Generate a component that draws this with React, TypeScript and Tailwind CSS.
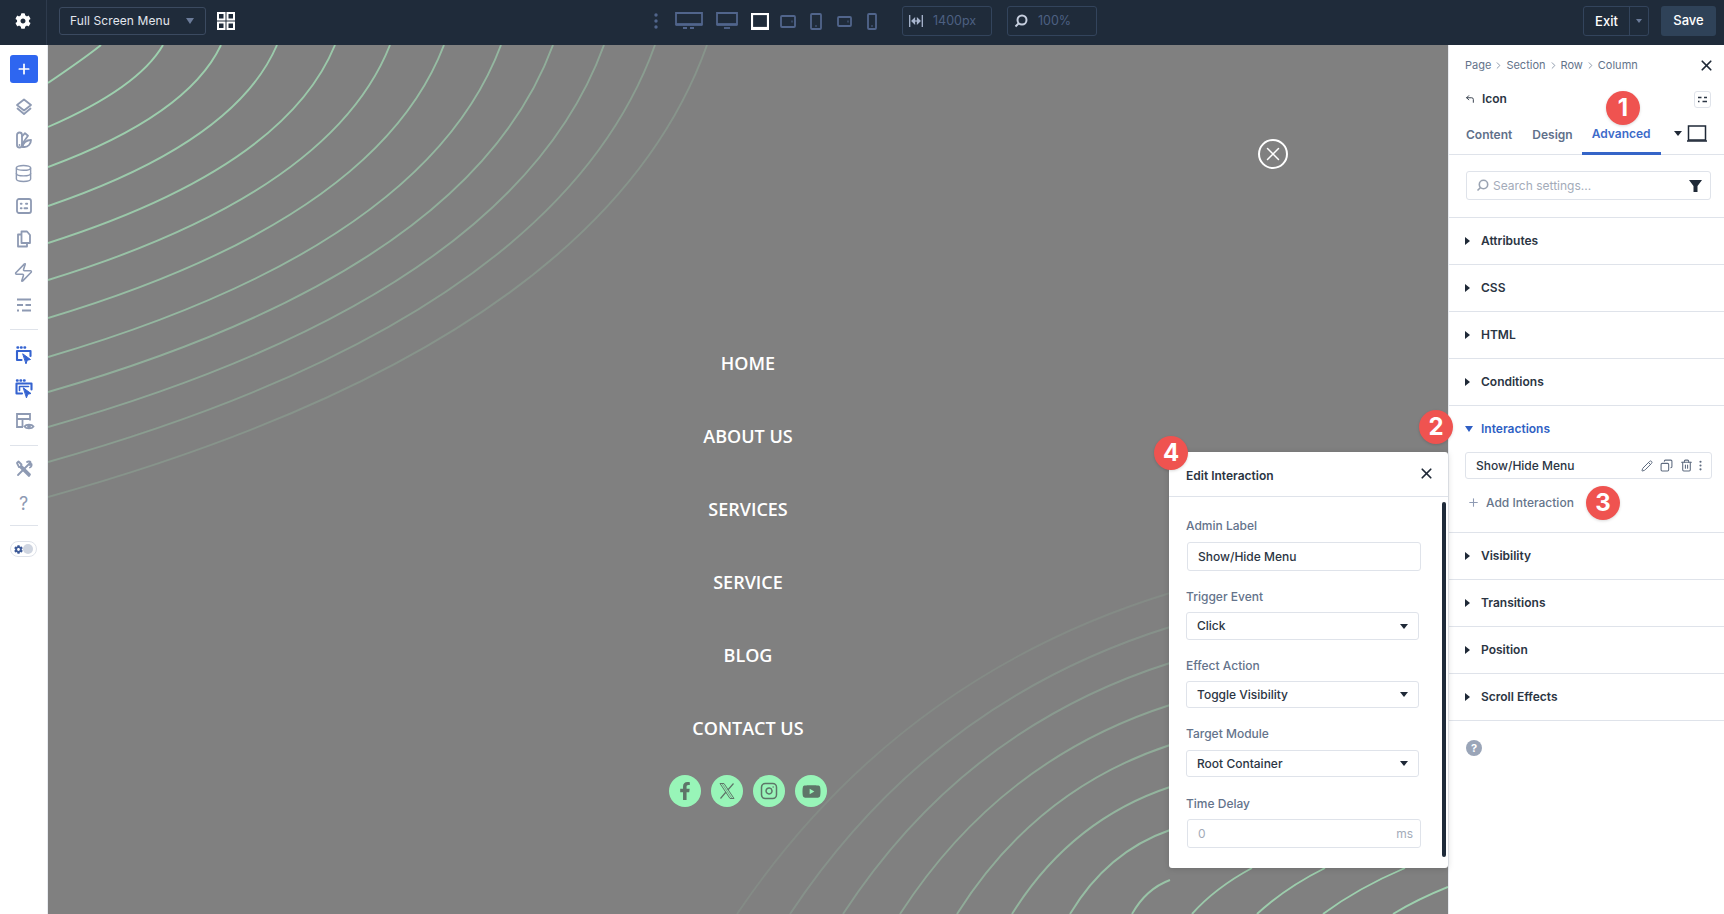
import React from "react";
import { FaCog, FaFacebookF, FaYoutube } from "react-icons/fa";
import { Database, Zap, X, Plus, Pencil, Copy, Trash2, EllipsisVertical, CornerUpLeft, ChevronRight, Instagram } from "lucide-react";

const TL: [number, number, number][] = [
  [101, 83, 0.72], [163, 127, 0.72], [221, 167, 0.7], [277, 206, 0.68], [335, 243, 0.65], [390, 280, 0.6],
  [444, 318, 0.55], [501, 357, 0.5], [553, 392, 0.42], [604, 427, 0.34], [655, 462, 0.26], [707, 497, 0.18],
];
const BR: [number, number, number][] = [
  [737, 593, 0.1], [790, 627, 0.16], [843, 663, 0.24], [900, 705, 0.32], [957, 745, 0.4], [1012, 787, 0.48],
  [1070, 830, 0.56], [1132, 880, 0.62],
];
const BR2: [string, number][] = [
  ["M1192 914 Q1215 888 1252 868", 0.66],
  ["M1257 914 Q1285 888 1325 868", 0.7],
  ["M1323 914 Q1358 888 1405 868", 0.72],
  ["M1393 914 Q1418 899 1448 887", 0.72],
];
const LINE = "#a8eebf";

function Arcs() {
  return (
    <svg className="absolute inset-0 w-[1400px] h-[869px]" viewBox="48 45 1400 869" fill="none">
      {TL.map(([x, y, o]) => (
        <path key={x} d={`M${x} 45 Q${0.85 * x} ${0.69 * y} 48 ${y}`} stroke={LINE} strokeOpacity={o} strokeWidth={1.9} />
      ))}
      {BR.map(([x, y, o]) => (
        <path key={x} d={`M${x} 914 Q${x + 0.371 * (1170 - x)} ${y + 0.26 * (914 - y)} 1170 ${y}`} stroke={LINE} strokeOpacity={o} strokeWidth={1.9} />
      ))}
      {BR2.map(([d, o]) => (
        <path key={d} d={d} stroke={LINE} strokeOpacity={o} strokeWidth={1.9} />
      ))}
    </svg>
  );
}

const S = ({ children, w = 20, h = 20, c = "text-[#8e9ab3]" }: { children: React.ReactNode; w?: number; h?: number; c?: string }) => (
  <svg width={w} height={h} viewBox={`0 0 ${w} ${h}`} fill="none" stroke="currentColor" strokeWidth={1.8} strokeLinecap="round" strokeLinejoin="round" className={c}>
    {children}
  </svg>
);

const Divider = () => <div className="w-7 h-px bg-[#dfe3ea]" />;

function Slot({ className, children }: { className: string; children: React.ReactNode }) {
  return <div className={`flex items-center justify-center ${className}`}>{children}</div>;
}

function Sidebar() {
  const blue = "text-[#3563d0]";
  return (
    <div className="w-12 shrink-0 bg-white flex flex-col items-center border-r border-[#e8ebf0]">
      <button className="mt-[10px] w-7 h-7 rounded-[3px] bg-[#2e66f0] text-white flex items-center justify-center">
        <Plus size={16} strokeWidth={2.6} />
      </button>
      <Slot className="h-[33px] w-full mt-[7.5px]">
        <S><path d="M10 2.5 17 8l-7 5.500L3 8Z" /><path d="M3.500 11.500 10 17l6.500-5.500" /></S>
      </Slot>
      <Slot className="h-[33px] w-full">
        <S>
          <path d="M3 5a2.500 2.500 0 0 1 5 0v10a2.500 2.500 0 0 1-5 0Z" />
          <path d="M8 6.500 11 3.200l3 2.600-6 8.500" />
          <path d="M8.500 17c.5-3.500 3.500-7 8.500-7 0 4-3 7-6.500 7Z" />
          <path d="M5.500 15h.01" />
        </S>
      </Slot>
      <Slot className="h-[33px] w-full"><Database size={19} className="text-[#8e9ab3]" strokeWidth={1.8} /></Slot>
      <Slot className="h-[33px] w-full">
        <S><rect x="3" y="3" width="14" height="14" rx="2" /><path d="M6.800 7.800h.8M12 7.800h1.200M6.800 12.200h.8M10.500 12.200h2.700" strokeWidth={1.9} /></S>
      </Slot>
      <Slot className="h-[33px] w-full">
        <S><path d="M7.500 2.500H13l3 3.500V14H7.500Z" /><path d="M7 5.500H4V17.500h9V14.500" /></S>
      </Slot>
      <Slot className="h-[33px] w-full"><Zap size={21} className="text-[#8e9ab3]" strokeWidth={1.8} /></Slot>
      <Slot className="h-[33px] w-full">
        <S><path d="M3 4.500h14M3 10h6M11.500 10H17M3 15.500h2M8 15.500h9" strokeWidth={2.2} strokeLinecap="butt" /></S>
      </Slot>
      <div className="mt-[7.5px]"><Divider /></div>
      <Slot className="h-[33px] w-full mt-[8.5px]">
        <S c={blue}>
          <path d="M3.500 2.500h.6M7 2.500h.6M10.500 2.500h.6" strokeWidth={2.4} />
          <path d="M3 15V6h13.500v5M3 15h4.500" strokeWidth={2.1} />
          <path d="M9 9l7.500 5.500-3.200.7-1.200 3.300Z" fill="currentColor" strokeWidth={1} />
        </S>
      </Slot>
      <Slot className="h-[33px] w-full">
        <S c={blue}>
          <path d="M3 2.500h.6M6.500 2.500h.6M10 2.500h.6" strokeWidth={2.4} />
          <path d="M2.500 15.500V5.500h15v6M2.500 15.500h5.500" strokeWidth={2.1} />
          <path d="M5.500 12.500V8.500h9" strokeWidth={1.6} />
          <path d="M9.500 10l7.500 5.500-3.200.7-1.200 3.300Z" fill="currentColor" strokeWidth={1} />
        </S>
      </Slot>
      <Slot className="h-[33px] w-full mt-[1px]">
        <svg width={22} height={20} viewBox="0 0 22 20" fill="none" stroke="#8e9ab3" strokeWidth={1.8} className="ml-[2px]">
          <path d="M9 15H3V2h13v6.500M3 7h13M8.500 7v8" />
          <path d="M10.500 14.500c1.600-2.600 7.400-2.600 9 0-1.600 2.600-7.400 2.600-9 0Z" fill="#fff" />
          <circle cx="15" cy="14.500" r="1" fill="#8e9ab3" />
        </svg>
      </Slot>
      <div className="mt-[6.5px]"><Divider /></div>
      <Slot className="h-[33px] w-full mt-[6px]">
        <S>
          <path d="M4 16 15 5M13 3c1-.8 3-.6 3.600.3L15 4.800l.8 1.200 1.700-1c.4 1.200 0 3-1.600 3.500" />
          <path d="M3 4 4.500 2.500l3 3-.5 1 9 9-1 1.500-9-9-1 .2Z" />
        </S>
      </Slot>
      <Slot className="h-[33px] w-full pt-[4px]">
        <span className="text-[18px] text-[#8e9ab3]">?</span>
      </Slot>
      <div className="mt-[7px]"><Divider /></div>
      <div className="mt-[15px] w-[27px] h-4 rounded-full border border-[#dfe3ea] flex items-center justify-between px-[3px]">
        <FaCog size={9} className="text-[#3d5a98]" />
        <div className="w-[10px] h-[10px] rounded-full bg-[#cfd5e0]" />
      </div>
    </div>
  );
}

function Devices() {
  const b = "#51658c";
  return (
    <div className="absolute left-[652px] top-0 h-[42px] flex items-center">
      <svg width={8} height={18} viewBox="0 0 8 18" fill={b} className="shrink-0">
        <circle cx="4" cy="3" r="1.700" /><circle cx="4" cy="9" r="1.700" /><circle cx="4" cy="15" r="1.700" />
      </svg>
      <svg width={28} height={18} viewBox="0 0 28 18" fill="none" stroke={b} strokeWidth={1.800} className="ml-[15px]">
        <path d="M1 1h26v11.500H1Z" /><path d="M1 12.500h26" strokeWidth={2.500} /><path d="M8 16h4M15 16h4" />
      </svg>
      <svg width={22} height={18} viewBox="0 0 22 18" fill="none" stroke={b} strokeWidth={1.800} className="ml-[13px]">
        <path d="M1 1h20v11.500H1Z" /><path d="M1 12.500h20" strokeWidth={2.500} /><path d="M8 16h6" />
      </svg>
      <svg width={18} height={17} viewBox="0 0 18 17" fill="none" stroke="#fff" strokeWidth={2.200} className="ml-[13px]">
        <rect x="1" y="1" width="16" height="14" /><path d="M0 16h18" />
      </svg>
      <svg width={16} height={13} viewBox="0 0 16 13" fill="none" stroke={b} strokeWidth={1.800} className="ml-[11px]">
        <rect x="1" y="1" width="14" height="11" rx="1" /><path d="M11.500 6.500h1" />
      </svg>
      <svg width={12} height={17} viewBox="0 0 12 17" fill="none" stroke={b} strokeWidth={1.800} className="ml-[14px]">
        <rect x="1" y="1" width="10" height="15" rx="1" /><path d="M5.500 13h1" />
      </svg>
      <svg width={15} height={11} viewBox="0 0 15 11" fill="none" stroke={b} strokeWidth={1.800} className="ml-[15px]">
        <rect x="1" y="1" width="13" height="9" rx="1" /><path d="M10.500 5.500h1" />
      </svg>
      <svg width={10} height={17} viewBox="0 0 10 17" fill="none" stroke={b} strokeWidth={1.800} className="ml-[15px]">
        <rect x="1" y="1" width="8" height="15" rx="1" /><path d="M4.500 13h1" />
      </svg>
      <div className="ml-[25px] w-[90px] h-[30px] rounded-[3px] border border-[#33445c] flex items-center pl-[6px]">
        <svg width={14} height={12} viewBox="0 0 14 12" fill="#a9b6cf" stroke="#a9b6cf" strokeWidth={1.300}>
          <path d="M.7 0v12M13.300 0v12" fill="none" />
          <path d="M3 6l2.500-2.500v5ZM11 6 8.500 3.500v5Z" /><path d="M5 6h4" />
        </svg>
        <span className="ml-[10px] text-[12.500px] text-[#4d6082]">1400px</span>
      </div>
      <div className="ml-[15px] w-[90px] h-[30px] rounded-[3px] border border-[#33445c] flex items-center pl-[6px]">
        <svg width={14} height={14} viewBox="0 0 14 14" fill="none" stroke="#c6cede" strokeWidth={2}>
          <circle cx="8" cy="6" r="4.500" /><path d="M4.500 9.500 1.500 12.500" />
        </svg>
        <span className="ml-[10px] text-[12.500px] text-[#4d6082]">100%</span>
      </div>
    </div>
  );
}

function TopBar() {
  return (
    <div className="relative h-[45px] bg-[#1f2b3a] flex items-start shrink-0">
      <div className="w-[47px] h-full pb-[3px] border-r border-[#2e3b4d] flex items-center justify-center text-white">
        <FaCog size={16} />
      </div>
      <div className="mt-[7px] ml-3 w-[147px] h-7 rounded-[3px] border border-[#3b4a60] flex items-center justify-between pl-[10px] pr-[11px]">
        <span className="text-[12px] tracking-[0.1px] text-[#e3e7ee]">Full Screen Menu</span>
        <span className="w-0 h-0 border-x-[4.5px] border-x-transparent border-t-[6px] border-t-[#6b7b99]" />
      </div>
      <svg width={18} height={18} viewBox="0 0 18 18" fill="none" stroke="#fff" strokeWidth={2} className="mt-3 ml-[11px]">
        <rect x="1" y="1" width="6.500" height="6.500" /><rect x="10.500" y="1" width="6.500" height="6.500" />
        <rect x="1" y="10.500" width="6.500" height="6.500" /><rect x="10.500" y="10.500" width="6.500" height="6.500" />
      </svg>
      <Devices />
      <div className="mt-[6px] ml-auto mr-2 flex items-center">
        <div className="w-[66px] h-[30px] rounded-[3px] border border-[#33445c] flex items-center">
          <span className="w-[46px] text-center text-[13px] font-medium text-white border-r border-[#33445c] leading-[28px]">Exit</span>
          <span className="mx-auto w-0 h-0 border-x-[3.5px] border-x-transparent border-t-[4px] border-t-[#6b7b99]" />
        </div>
        <div className="ml-3 w-[55px] h-[30px] rounded-[3px] bg-[#2f4258] flex items-center justify-center text-[13px] font-medium text-white">Save</div>
      </div>
    </div>
  );
}

const XLogo = () => (
  <svg width={20} height={20} viewBox="0 0 20 20" fill="none" stroke="currentColor" strokeWidth={1}>
    <path d="M3 2.500h4L17 17.500h-4Z" /><path d="M5 2.500 15 17.500" strokeWidth={0.6} />
    <path d="M16.500 2.500 10.800 9M9 11l-5.500 6.500" strokeWidth={1.200} />
  </svg>
);

function Canvas() {
  const items = ["HOME", "ABOUT US", "SERVICES", "SERVICE", "BLOG", "CONTACT US"];
  const social = [
    <FaFacebookF size={18} />, <XLogo />, <Instagram size={18} strokeWidth={2} />, <FaYoutube size={19} />,
  ];
  return (
    <div className="relative flex-1 bg-[#808080] overflow-hidden flex flex-col items-center pt-[281.500px]">
      <Arcs />
      <div className="absolute left-[1210px] top-[94px] w-[30px] h-[30px] rounded-full border-2 border-white flex items-center justify-center text-white">
        <X size={22} strokeWidth={1.6} />
      </div>
      {items.map((t) => (
        <div key={t} className="relative h-[73px] flex items-center text-[18px] font-semibold text-white font-['Open_Sans',sans-serif]">{t}</div>
      ))}
      <div className="relative mt-[10.500px] flex gap-[10px]">
        {social.map((ic, i) => (
          <div key={i} className="w-8 h-8 rounded-full bg-[#98f5b8] flex items-center justify-center text-[#5e7568]">{ic}</div>
        ))}
      </div>
    </div>
  );
}

function Caret({ open = false }: { open?: boolean }) {
  return open ? (
    <span className="w-0 h-0 border-x-[4.5px] border-x-transparent border-t-[6px] border-t-[#2f5fc4]" />
  ) : (
    <span className="w-0 h-0 border-y-[4.5px] border-y-transparent border-l-[5px] border-l-[#1f2937]" />
  );
}

const Row = ({ label }: { label: string }) => (
  <div className="h-[47px] border-b border-[#dfe3ea] flex items-center pl-[16px]">
    <div className="w-[16px] flex"><Caret /></div>
    <span className="text-[12px] font-semibold text-[#2b3543]">{label}</span>
  </div>
);

function Panel() {
  return (
    <div className="w-[276px] shrink-0 bg-white border-l border-[#e8ebf0] flex flex-col">
      <div className="h-10 flex items-center pl-[16px] pr-[9px] text-[11px] text-[#63738a]">
        <span>Page</span><ChevronRight size={11} className="mx-[2px] text-[#8793a5]" />
        <span>Section</span><ChevronRight size={11} className="mx-[2px] text-[#8793a5]" />
        <span>Row</span><ChevronRight size={11} className="mx-[2px] text-[#8793a5]" />
        <span>Column</span>
        <X size={17} strokeWidth={2.4} className="ml-auto text-[#1f2937]" />
      </div>
      <div className="h-7 flex items-center pl-[16px] pr-[13px]">
        <CornerUpLeft size={10} strokeWidth={2.2} className="text-[#2b3543]" />
        <span className="ml-[7px] text-[12px] font-semibold text-[#2b3543]">Icon</span>
        <div className="ml-auto w-[17px] h-[17px] rounded-[3px] border border-[#dfe3ea] flex items-center justify-center">
          <svg width={9} height={7} viewBox="0 0 9 7" fill="none" stroke="#2b3543" strokeWidth={1.500}>
            <path d="M0 1.500h3.500M6 1.500h3M0 5.500h1.500M4.500 5.500h4.500" />
          </svg>
        </div>
      </div>
      <div className="h-[42px] border-b border-[#dfe3ea] flex items-stretch pl-[17px] text-[12px] font-semibold text-[#5f708a]">
        <div className="flex items-center pt-[2px]">Content</div>
        <div className="flex items-center pt-[2px] ml-[20px]">Design</div>
        <div className="ml-[9px] w-[79px] -mb-px flex items-center justify-center pt-[2px] border-b-[3px] border-[#3565c8] text-[#3d6bc9]">Advanced</div>
        <div className="flex items-center ml-[13px]">
          <span className="w-0 h-0 border-x-[4.500px] border-x-transparent border-t-[5px] border-t-[#1f2937]" />
        </div>
        <div className="flex items-center ml-[5px]">
          <svg width={20} height={17} viewBox="0 0 20 17" fill="none" stroke="#1f2937" strokeWidth={1.500}>
            <rect x="1.500" y="1" width="17" height="14" /><path d="M0 16h20" />
          </svg>
        </div>
      </div>
      <div className="h-[63px] border-b border-[#dfe3ea] pt-4 pl-[17px] pr-[13px]">
        <div className="h-[29px] rounded-[3px] border border-[#dfe3ea] flex items-center pl-[9px] pr-2">
          <svg width={13} height={13} viewBox="0 0 13 13" fill="none" stroke="#9aa3b2" strokeWidth={1.600}>
            <circle cx="7.500" cy="5.500" r="4.200" /><path d="M4.500 8.500 1.500 11.500" />
          </svg>
          <span className="ml-[4px] pt-px text-[12px] text-[#a3abb9]">Search settings...</span>
          <svg width={13} height={12} viewBox="0 0 13 12" fill="#1f2937" className="ml-auto">
            <path d="M0 0h13L8.500 6v6h-4V6Z" />
          </svg>
        </div>
      </div>
      <Row label="Attributes" />
      <Row label="CSS" />
      <Row label="HTML" />
      <Row label="Conditions" />
      <div className="h-[127px] border-b border-[#dfe3ea]">
        <div className="h-[46px] flex items-center pl-[16px]">
          <div className="w-[16px] flex"><Caret open /></div>
          <span className="text-[12px] font-semibold text-[#2f5fc4]">Interactions</span>
        </div>
        <div className="ml-[16px] w-[247px] h-[27px] rounded-[3px] border border-[#dfe3ea] flex items-center pl-[10px] pr-[4px]">
          <span className="text-[12px] font-medium text-[#2b3543]">Show/Hide Menu</span>
          <Pencil size={12} className="ml-auto text-[#5f6c80]" />
          <Copy size={13} className="ml-[7px] text-[#5f6c80] -scale-x-100" />
          <Trash2 size={13} className="ml-[7px] text-[#5f6c80]" />
          <EllipsisVertical size={13} className="ml-[1px] text-[#5f6c80]" />
        </div>
        <div className="h-[47px] pl-[18px] flex items-center">
          <Plus size={13} className="text-[#8e9ab3]" />
          <span className="ml-[6px] text-[12px] font-medium text-[#66758b]">Add Interaction</span>
        </div>
      </div>
      <Row label="Visibility" />
      <Row label="Transitions" />
      <Row label="Position" />
      <Row label="Scroll Effects" />
      <div className="pl-[17px] pt-[19px]">
        <div className="w-4 h-4 rounded-full bg-[#9aa5b8] flex items-center justify-center text-white text-[11px] font-bold">?</div>
      </div>
    </div>
  );
}

const Label = ({ t, mt }: { t: string; mt: string }) => (
  <div className={`h-[18px] leading-[18px] text-[12px] font-medium text-[#64738b] ${mt}`}>{t}</div>
);

const Select = ({ t, cls }: { t: string; cls: string }) => (
  <div className={`w-[233px] rounded-[3px] border border-[#dfe3ea] flex items-center justify-between pl-[10px] pr-[10px] ${cls}`}>
    <span className="text-[12px] font-medium text-[#2b3543]">{t}</span>
    <span className="w-0 h-0 border-x-[4.500px] border-x-transparent border-t-[5px] border-t-[#1f2937]" />
  </div>
);

function Modal() {
  return (
    <div className="absolute left-[1169px] top-[452px] w-[279px] h-[416px] bg-white rounded-[3px] shadow-[0_1px_6px_rgba(0,0,0,0.15)] overflow-hidden">
      <div className="h-[45px] border-b border-[#dfe3ea] flex items-center justify-between pl-[17px] pr-[13px]">
        <span className="mt-[3px] text-[12px] font-semibold text-[#2b3543]">Edit Interaction</span>
        <X size={17} strokeWidth={2.400} className="-mt-[2px] text-[#1f2937]" />
      </div>
      <div className="relative pl-[17px] pt-5">
        <Label t="Admin Label" mt="" />
        <div className="ml-[1px] mt-[7px] w-[234px] h-[29px] rounded-[3px] border border-[#dfe3ea] flex items-center pl-[10px] text-[12px] font-medium text-[#2b3543]">Show/Hide Menu</div>
        <Label t="Trigger Event" mt="mt-[17px]" />
        <div className="mt-[6px]"><Select t="Click" cls="h-7" /></div>
        <Label t="Effect Action" mt="mt-[17px]" />
        <div className="mt-[6px]"><Select t="Toggle Visibility" cls="h-[27px]" /></div>
        <Label t="Target Module" mt="mt-[17px]" />
        <div className="mt-[7px]"><Select t="Root Container" cls="h-[27px]" /></div>
        <Label t="Time Delay" mt="mt-[18px]" />
        <div className="ml-[1px] mt-[6px] w-[234px] h-[29px] rounded-[3px] border border-[#dfe3ea] flex items-center justify-between pl-[10px] pr-[7px] text-[12px] text-[#a3abb9]">
          <span>0</span><span>ms</span>
        </div>
        <div className="absolute left-[273px] top-[5px] w-1 h-[355px] rounded-full bg-[#1f2b3a]" />
      </div>
    </div>
  );
}

const Badge = ({ n, cls }: { n: number; cls: string }) => (
  <div className={`absolute w-[34px] h-[34px] rounded-full bg-[#ef5350] text-white text-[24px] font-bold flex items-center justify-center shadow-[0_1px_3px_rgba(0,0,0,0.15)] ${cls}`}>{n}</div>
);

export default function App() {
  return (
    <div className="relative w-[1724px] h-[914px] overflow-hidden flex flex-col font-['Inter',sans-serif]">
      <TopBar />
      <div className="flex flex-1 min-h-0">
        <Sidebar />
        <Canvas />
        <Panel />
      </div>
      <Modal />
      <Badge n={1} cls="left-[1606px] top-[91px]" />
      <Badge n={2} cls="left-[1419px] top-[410px]" />
      <Badge n={3} cls="left-[1586px] top-[486px]" />
      <Badge n={4} cls="left-[1154px] top-[436px]" />
    </div>
  );
}
